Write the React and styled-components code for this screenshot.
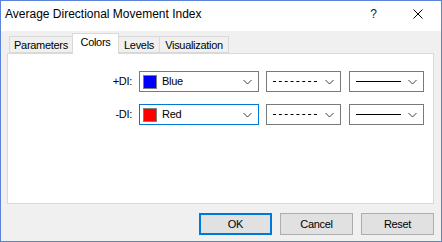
import styled, { createGlobalStyle } from 'styled-components';

const GlobalStyle = createGlobalStyle`
  html, body {
    margin: 0;
    padding: 0;
    background: #ffffff;
  }
  body {
    font-family: "Liberation Sans", Arial, sans-serif;
  }
`;

const Window = styled.div`
  width: 442px;
  height: 242px;
  box-sizing: border-box;
  border: 1px solid #5b84d9;
  background: #f0f0f0;
  display: flex;
  flex-direction: column;
`;

const TitleBar = styled.div`
  height: 30px;
  background: #ffffff;
  display: flex;
  align-items: flex-start;
`;

const Title = styled.div`
  flex: 1;
  padding: 6px 0 0 4px;
  font-size: 12px;
  line-height: 14px;
  color: #000;
`;

const TitleButton = styled.div`
  width: 45px;
  height: 30px;
  display: flex;
  align-items: center;
  justify-content: center;
  font-size: 12px;
  color: #1a1a1a;
  padding: 0 ${(p) => p.pr || 0}px 4px 0;
  box-sizing: border-box;
`;

const Body = styled.div`
  flex: 1;
  display: flex;
  flex-direction: column;
  padding: 2px 7px 6px 6px;
  font-size: 11px;
  letter-spacing: -0.3px;
  color: #000;
`;

const TabStrip = styled.div`
  display: flex;
  align-items: flex-end;
  height: 21px;
  margin: 0 0 -1px 2px;
  position: relative;
  z-index: 1;
`;

const Tab = styled.div`
  box-sizing: border-box;
  width: ${(p) => p.w}px;
  height: ${(p) => (p.active ? 21 : 17)}px;
  margin-bottom: ${(p) => (p.active ? 0 : 1)}px;
  margin-left: ${(p) => (p.first ? 0 : -1)}px;
  border: 1px solid #d9d9d9;
  border-bottom: ${(p) => (p.active ? 'none' : '1px solid #d9d9d9')};
  background: ${(p) => (p.active ? '#ffffff' : '#f0f0f0')};
  position: relative;
  z-index: ${(p) => (p.active ? 2 : 1)};
  display: flex;
  justify-content: center;
  align-items: flex-start;
  padding-top: 2px;
  line-height: 13px;
`;

const Panel = styled.div`
  height: 151px;
  box-sizing: border-box;
  background: #ffffff;
  border: 1px solid #d9d9d9;
  padding-top: 17px;
  display: flex;
  flex-direction: column;
  gap: 12px;
`;

const Row = styled.div`
  display: flex;
  align-items: center;
  height: 21px;
`;

const Label = styled.div`
  width: 124px;
  text-align: right;
  margin-right: 7px;
  padding-bottom: 1px;
`;

const Combo = styled.div`
  box-sizing: border-box;
  width: ${(p) => p.w}px;
  height: 21px;
  margin-left: ${(p) => p.gap || 0}px;
  border: 1px solid ${(p) => (p.focused ? '#0078d7' : '#7a7a7a')};
  background: #ffffff;
  display: flex;
  align-items: center;
  padding: 0 6px 0 ${(p) => p.pl || 3}px;
`;

const Swatch = styled.span`
  width: 14px;
  height: 14px;
  box-sizing: border-box;
  border: 1px solid #808080;
  background: ${(p) => p.color};
  margin-right: 5px;
  flex: none;
`;

const ComboText = styled.span`
  flex: 1;
  padding-bottom: 1px;
`;

const LineArea = styled.span`
  flex: 1;
  display: flex;
  align-items: center;
  height: 100%;
  padding-bottom: 1px;
  box-sizing: border-box;
`;

const Footer = styled.div`
  display: flex;
  justify-content: flex-end;
  gap: 8px;
  margin-top: 9px;
`;

const Button = styled.button`
  box-sizing: border-box;
  width: 73px;
  height: 22px;
  background: #e1e1e1;
  border: ${(p) => (p.primary ? '2px solid #0078d7' : '1px solid #adadad')};
  font: inherit;
  font-size: 11px;
  letter-spacing: -0.3px;
  color: #000;
  padding: 0 0 1px;
  margin: 0;
`;

function Chevron() {
  return (
    <svg width="9" height="6" viewBox="0 0 9 6" style={{ flex: 'none' }}>
      <polyline points="0.5,1 4.5,5 8.5,1" fill="none" stroke="#404040" strokeWidth="1" />
    </svg>
  );
}

function StyleLine({ dashed }) {
  return (
    <svg width="46" height="1" viewBox="0 0 46 1">
      <line
        x1="0"
        y1="0.5"
        x2="45"
        y2="0.5"
        stroke="#000"
        strokeWidth="1"
        strokeDasharray={dashed ? '3 2.85' : undefined}
      />
    </svg>
  );
}

const rows = [
  { label: '+DI:', name: 'Blue', color: '#0000ff', focused: false },
  { label: '-DI:', name: 'Red', color: '#ff0000', focused: true },
];

const tabs = [
  { name: 'Parameters', w: 64 },
  { name: 'Colors', w: 47, active: true },
  { name: 'Levels', w: 42 },
  { name: 'Visualization', w: 70 },
];

export default function App() {
  return (
    <>
      <GlobalStyle />
      <Window>
        <TitleBar>
          <Title>Average Directional Movement Index</Title>
          <TitleButton pr={0}>?</TitleButton>
          <TitleButton pr={2}>
            <svg width="10" height="10" viewBox="0 0 10 10">
              <path d="M0.5 0.5 L9.5 9.5 M9.5 0.5 L0.5 9.5" stroke="#000" strokeWidth="1" />
            </svg>
          </TitleButton>
        </TitleBar>
        <Body>
          <TabStrip>
            {tabs.map((t, i) => (
              <Tab key={t.name} w={t.w} active={t.active} first={i === 0}>
                {t.name}
              </Tab>
            ))}
          </TabStrip>
          <Panel>
            {rows.map((r) => (
              <Row key={r.label}>
                <Label>{r.label}</Label>
                <Combo w={120} focused={r.focused}>
                  <Swatch color={r.color} />
                  <ComboText>{r.name}</ComboText>
                  <Chevron />
                </Combo>
                <Combo w={75} gap={7} pl={6}>
                  <LineArea>
                    <StyleLine dashed />
                  </LineArea>
                  <Chevron />
                </Combo>
                <Combo w={75} gap={8} pl={6}>
                  <LineArea>
                    <StyleLine />
                  </LineArea>
                  <Chevron />
                </Combo>
              </Row>
            ))}
          </Panel>
          <Footer>
            <Button primary>OK</Button>
            <Button>Cancel</Button>
            <Button>Reset</Button>
          </Footer>
        </Body>
      </Window>
    </>
  );
}
